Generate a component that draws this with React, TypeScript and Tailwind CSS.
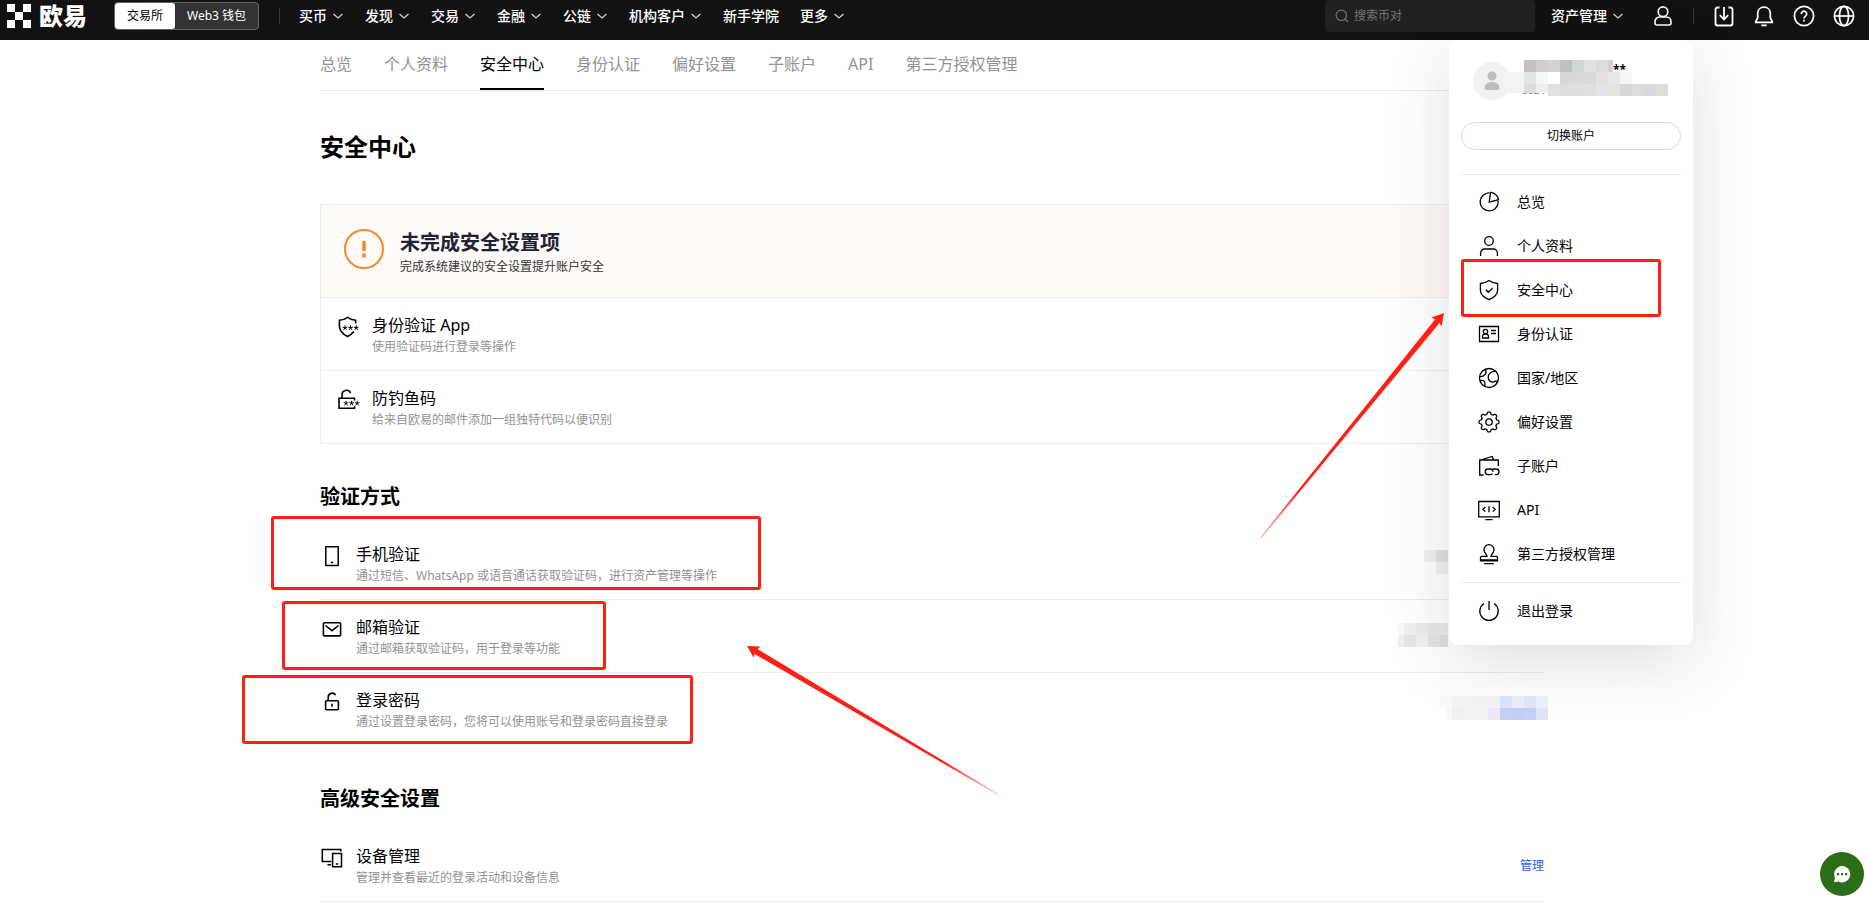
import type { ReactNode } from "react";
import clsx from "clsx";
import { twMerge } from "tailwind-merge";


const Icon = ({ size = "size-[22px]", width = 1.3, box = 22, children }: { size?: string; width?: number; box?: number; children: ReactNode }) => (
    <svg className={clsx("shrink-0", size)} viewBox={`0 0 ${box} ${box}`} fill="none" stroke="currentColor" strokeWidth={width} aria-hidden="true">
        {children}
    </svg>
)

const Chevron = () => (
    <svg className="size-3 shrink-0 text-neutral-300" viewBox="0 0 12 12" fill="none" stroke="currentColor" strokeWidth="1.3" aria-hidden="true">
        <path d="M1.5 4 6 8l4.5-4" />
    </svg>
)

// three little stars shared by the authenticator and anti-phishing icons
const Stars = ({ x, y }: { x: number; y: number }) => (
    <g strokeWidth="1">
        {[0, 5.6, 11.2].map((dx) => (
            <path key={dx} d={`M${x + dx} ${y - 2.5}v2.5l-2.3 -.7M${x + dx} ${y}l2.3 -.7M${x + dx} ${y}l-1.5 2.1M${x + dx} ${y}l1.5 2.1`} />
        ))}
    </g>
)

// outline of the settings cog: eight soft teeth round (11, 11)
const cogPath = Array.from({ length: 96 }, (_, i) => {
    const angle = (i / 96) * Math.PI * 2
    const wave = Math.tanh(2.2 * Math.cos(8 * angle))
    const r = 8.9 + 1.1 * wave
    return `${i ? "L" : "M"}${(11 + r * Math.cos(angle)).toFixed(2)} ${(11 + r * Math.sin(angle)).toFixed(2)}`
}).join("") + "Z"

const navItems = [
    { label: "买币", menu: true },
    { label: "发现", menu: true },
    { label: "交易", menu: true },
    { label: "金融", menu: true },
    { label: "公链", menu: true },
    { label: "机构客户", menu: true },
    { label: "新手学院", menu: false },
    { label: "更多", menu: true },
]

const tabs = ["总览", "个人资料", "安全中心", "身份认证", "偏好设置", "子账户", "API", "第三方授权管理"]

const menuItems = [
    {
        label: "总览",
        icon: (
            <Icon>
                <path d="M8.6 2.3A9 9 0 1 0 20 12.6" />
                <path d="M8.600 2.300C9.500 2 10.500 1.900 11.500 2M20 12.600c.1-.9.1-1.700 0-2.600" />
                <path d="M12.600 1.400 11.200 11.200l9.400-2.500a9.600 9.600 0 0 0-8-7.300Z" />
            </Icon>
        ),
    },
    {
        label: "个人资料",
        icon: (
            <Icon>
                <circle cx="11" cy="6" r="4.3" />
                <path d="M2.6 21v-3a4 4 0 0 1 4-4h8.8a4 4 0 0 1 4 4v3" />
            </Icon>
        ),
    },
    {
        label: "安全中心",
        marked: true,
        icon: (
            <Icon>
                <path d="M11 1.500c2.600 1.900 5.400 2.800 8.600 3v6.400c0 4.600-3.400 7.600-8.600 9.800-5.200-2.200-8.600-5.200-8.600-9.800V4.500c3.200-.2 6-1.100 8.600-3Z" />
                <path d="m7.800 10.800 2.500 2.500 4.400-4.400" />
            </Icon>
        ),
    },
    {
        label: "身份认证",
        icon: (
            <Icon>
                <path d="M1.500 3.500h19v15h-19z" />
                <circle cx="7.500" cy="8.500" r="2.200" />
                <path d="M4.500 15v-1.500a2.500 2.500 0 0 1 2.500-2.500h1a2.500 2.500 0 0 1 2.500 2.500V15zM13 7.500h5M13 10.500h5" />
            </Icon>
        ),
    },
    {
        label: "国家/地区",
        icon: (
            <Icon>
                <circle cx="11" cy="11" r="9.500" />
                <path d="M7 2.400c1.500 2 1.300 3.600.2 4.800C5.800 8.700 5.500 10 1.700 9.500M2.200 13.700c2-.6 3.800-.2 4.400 1.200.7 1.600-.2 2.400.5 4.600M17.500 4.400c-4.200-.4-7.500 2.400-7.300 6 .2 3 2.300 4.800 4.800 4.600 1.800-.2 2.200-1.500 3.700-1 .7.300.8 1 .4 2" />
            </Icon>
        ),
    },
    {
        label: "偏好设置",
        icon: (
            <Icon>
                <path d={cogPath} strokeLinejoin="round" />
                <circle cx="11" cy="11" r="3.200" />
            </Icon>
        ),
    },
    {
        label: "子账户",
        icon: (
            <Icon>
                <path d="M5.500 20H1.700V5h18.600v6M2.500 5l11.700-3.500L15.700 5" />
                <path d="M14.500 18.800c-.7.600-1.500.8-2.300.8H10a2.800 2.800 0 0 1 0-5.600h2.200a2.800 2.800 0 0 1 2.800 2.800M13.700 14.800c.7-.6 1.500-.8 2.300-.8h2.200a2.800 2.800 0 0 1 0 5.600H17" />
            </Icon>
        ),
    },
    {
        label: "API",
        icon: (
            <Icon>
                <path d="M.7 2.500h20.600v15.400H.7zM7.500 20.700h7M7.300 8 4.900 10.300l2.400 2.300M14.700 8l2.400 2.300-2.400 2.300M11 7.300v6" />
            </Icon>
        ),
    },
    {
        label: "第三方授权管理",
        icon: (
            <Icon>
                <path d="M9 13.300c0-2-3-3.200-3-6.600a5 5 0 0 1 10 0c0 3.400-3 4.600-3 6.600h5.200a1.300 1.300 0 0 1 1.300 1.300v3.200H2.500v-3.200a1.300 1.300 0 0 1 1.300-1.300zM6.200 20.600h9.600M3 16.800h16" />
            </Icon>
        ),
    },
]

const suggestions = [
    {
        title: "身份验证 App",
        desc: "使用验证码进行登录等操作",
        icon: (
            <Icon size="size-6" box={24} width={1.6}>
                <path d="M19.600 8.500V5.300C16.500 5 14 4 11.600 2.300 9.200 4 6.500 5 3.400 5.300v5.400c0 5 3.200 8.300 8.200 10.800 2.600-1.300 4.700-2.900 6.200-4.900" />
                <Stars x={9} y={12.800} />
            </Icon>
        ),
    },
    {
        title: "防钓鱼码",
        desc: "给来自欧易的邮件添加一组独特代码以便识别",
        icon: (
            <Icon size="size-6" box={24} width={1.6}>
                <path d="M18.500 12.500V10.300H3v9.900h15.500v-2M6 10V7a4.500 4.500 0 0 1 8.600-2" />
                <Stars x={10} y={15.300} />
            </Icon>
        ),
    },
]

const methods = [
    {
        title: "手机验证",
        desc: "通过短信、WhatsApp 或语音通话获取验证码，进行资产管理等操作",
        mark: "-left-[49px] -top-[11px] h-[74px] w-[490px]",
        mosaicPlace: "mr-24",
        mosaic: [
            ["bg-[#f1f1f3]", "bg-[#e2e2e4]"],
            ["bg-[#f2f2f4]"],
        ],
        icon: (
            <Icon size="size-6" box={24} width={1.5}>
                <path d="M5.800 2.800h12.400v18.700H5.800zM10.800 18.500h2.400" />
            </Icon>
        ),
    },
    {
        title: "邮箱验证",
        desc: "通过邮箱获取验证码，用于登录等功能",
        mark: "-left-[38px] top-px h-[69px] w-[324px]",
        mosaicPlace: "mr-24",
        mosaic: [
            ["w-1.5 bg-[#f7f7f7]", "bg-[#f0f0f0]", "bg-[#ececec]", "bg-[#e8e8e9]", "w-2 bg-[#eaeaeb]"],
            ["w-1.5 bg-[#efefef]", "bg-[#e6e6e6]", "bg-[#f0f1f3]", "bg-[#e4e4e4]", "w-2 bg-[#dedee0]"],
        ],
        icon: (
            <Icon size="size-6" box={24} width={1.6}>
                <rect x="3.400" y="5.700" width="17.200" height="13.200" rx="1" />
                <path d="m5.500 8.500 6.500 5.200 6.500-5.200" />
            </Icon>
        ),
    },
    {
        title: "登录密码",
        desc: "通过设置登录密码，您将可以使用账号和登录密码直接登录",
        mark: "-left-[78px] top-[2px] h-[69px] w-[451px]",
        mosaicPlace: "-mr-1",
        mosaic: [
            ["bg-[#fafafa]", "bg-[#f3f4f3]", "bg-[#f4f4f3]", "bg-[#f3f3f3]", "bg-[#f2f2fb]", "bg-[#dfe5f8]", "bg-[#eceefa]", "bg-[#e3e8f7]", "bg-[#eef1fb]"],
            ["w-1.5 bg-[#f7f7f6]", "bg-[#f1f0ee]", "bg-[#f1f3f2]", "bg-[#f2f3f2]", "bg-[#e9e9f9]", "bg-[#c6d0f4]", "bg-[#c2cef4]", "bg-[#c8cff4]", "bg-[#dce5f9]"],
        ],
        icon: (
            <Icon size="size-6" box={24} width={1.600}>
                <rect x="5.600" y="10.700" width="12.800" height="9" rx="1" />
                <path d="M8.200 10.500V7.300a4 4 0 0 1 7.400-2.200M12 13.700v3" />
            </Icon>
        ),
    },
]

const profileMosaic = [
    ["bg-[#c0c1c3]", "bg-[#cfcccb]", "bg-[#d1d1d1]", "bg-[#c1bec0]", "bg-[#d0d4d5]", "bg-[#e2e2e2]", "bg-[#dddbd9]", "w-[5px] bg-[#d2d2d2]"],
    ["bg-[#e2e6e3]", "bg-[#f6f6f6]", "bg-white", "bg-[#dad8d6]", "bg-[#d8d9db]", "bg-[#dad9d9]", "bg-[#e3e1df]", "bg-[#e5e7e9]", "bg-[#f5f5f5]"],
    ["h-[9px] bg-[#dbdbd9]", "h-[9px] bg-[#eeeeee]", "bg-[#dfe2e0]", "bg-[#dddddc]", "bg-[#dedede]", "bg-[#dfdfdf]", "bg-[#e1e5e6]", "bg-[#e3e3e0]", "bg-[#d9d8d8]", "bg-[#dddbd9]", "bg-[#d8d9dc]", "bg-[#dfdddb]"],
]

const Mosaic = ({ rows, align = "items-end" }: { rows: string[][]; align?: string }) => (
    <div className={clsx("flex flex-col", align)} aria-hidden="true">
        {rows.map((row, i) => (
            <div key={i} className="flex">
                {row.map((cell, j) => (
                    <span key={j} className={twMerge("h-3 w-3", cell)} />
                ))}
            </div>
        ))}
    </div>
)

const Mark = ({ place }: { place: string }) => (
    <span className={clsx("pointer-events-none absolute rounded-[3px] border-[3px] border-[#ff2015]", place)} />
)

const Row = ({ title, desc, icon, children }: { title: string; desc: string; icon: ReactNode; children?: ReactNode }) => (
    <>
        <div className="flex gap-3">
            <span className="mt-0.5">{icon}</span>
            <div>
                <h3 className="text-base">{title}</h3>
                <p className="text-xs leading-5 text-[#929292]">{desc}</p>
            </div>
        </div>
        {children}
    </>
)

const AccountMenu = () => (
    <div className="absolute right-44 top-full w-61 rounded-lg bg-white px-3 pb-3 text-sm text-black shadow-[0_16px_64px_rgba(18,24,38,0.14)]">
        <div className="relative flex h-[82px] gap-3 px-3 pt-[22px]">
            <span className="flex size-[38px] items-center justify-center rounded-full bg-[#f1f1f1]">
                <svg className="size-5" viewBox="0 0 20 20" fill="#bdbdbd" aria-hidden="true">
                    <circle cx="10" cy="5" r="4.500" />
                    <path d="M2.500 17c0-3.500 3-6 7.500-6s7.500 2.500 7.500 6c0 1.500-1 2-2.500 2H5c-1.500 0-2.500-.5-2.500-2Z" />
                </svg>
            </span>
            <p className="absolute left-[59px] top-10 text-xs leading-5 text-[#929292]">UID:</p>
            <div className="absolute left-[42px] top-8 h-[21px] w-[21px] bg-[#f3f3f2]" />
            <b className="absolute left-[152px] top-5 text-xs leading-5">**</b>
            <div className="absolute left-[63px] top-5">
                <Mosaic rows={profileMosaic} align="items-start" />
            </div>
        </div>
        <button type="button" className="h-7 w-full rounded-full border border-[#dbdbdb] text-xs">切换账户</button>
        <ul className="mt-6 border-y border-[#ebecf2] pt-[5px] pb-[6px]">
            {menuItems.map((item) => (
                <li key={item.label} className="relative">
                    <a href="#" className="flex h-11 items-center gap-[17px] px-[17px]">
                        {item.icon}
                        {item.label}
                    </a>
                    {item.marked && <Mark place="left-0 right-5 -top-[9px] h-[58px]" />}
                </li>
            ))}
        </ul>
        <a href="#" className="mt-[6px] flex h-11 items-center gap-[17px] px-[17px]">
            <Icon>
                <path d="M6 3.500a9.200 9.200 0 1 0 10 0M11 1v9" />
            </Icon>
            退出登录
        </a>
    </div>
)

const Header = () => (
    <header className="relative z-10 flex h-10 items-center bg-[#121212] pb-2 pl-[7px] pr-[14px] text-sm text-white">
        <a href="#" className="flex items-center gap-2">
            <svg className="size-6" viewBox="0 0 24 24" fill="currentColor" aria-hidden="true">
                <path d="M0 0h8v8H0zM16 0h8v8h-8zM8 8h8v8H8zM0 16h8v8H0zM16 16h8v8h-8z" />
            </svg>
            <span className="text-2xl leading-8 font-black">欧易</span>
        </a>
        <div className="ml-[27px] flex h-7 items-stretch rounded border border-[#666] bg-[#333] text-xs">
            <button type="button" className="rounded-[3px] bg-white px-3 text-black">交易所</button>
            <button type="button" className="px-3">Web3 钱包</button>
        </div>
        <span className="ml-5 h-4 w-px bg-[#3a3a3a]" />
        <nav className="ml-[19px] flex items-center gap-[21px]">
            {navItems.map((item) => (
                <a key={item.label} href="#" className="flex items-center gap-[5px] font-medium whitespace-nowrap">
                    {item.label}
                    {item.menu && <Chevron />}
                </a>
            ))}
        </nav>
        <label className="ml-auto flex h-8 w-[210px] items-center gap-[5px] rounded bg-[#212121] px-[10px] text-[#757575]">
            <Icon size="size-[14px]" box={14} width={1.200}>
                <circle cx="6.300" cy="6.300" r="5.200" />
                <path d="m10 10 3.200 3.200" />
            </Icon>
            <input type="text" placeholder="搜索币对" aria-label="搜索币对" className="w-full min-w-0 bg-transparent text-xs outline-none placeholder:text-[#757575]" />
        </label>
        <a href="#" className="ml-4 flex items-center gap-[5px] font-medium">
            资产管理
            <Chevron />
        </a>
        <button type="button" aria-label="账户" className="ml-7">
            <Icon width={1.600}>
                <circle cx="11" cy="6.700" r="4.800" />
                <path d="M7.500 12h7a4.500 4.500 0 0 1 4.500 4.500V18a2 2 0 0 1-2 2H5a2 2 0 0 1-2-2v-1.500A4.500 4.500 0 0 1 7.500 12Z" />
            </Icon>
        </button>
        <span className="mx-[19px] h-4 w-px bg-[#3a3a3a]" />
        <div className="flex items-center gap-[18px]">
            <button type="button" aria-label="下载">
                <Icon width={1.800}>
                    <path d="M6.500 2.500h-2a2 2 0 0 0-2 2v14a2 2 0 0 0 2 2h13a2 2 0 0 0 2-2v-14a2 2 0 0 0-2-2h-2M11 2v12M6.800 10.200l4.200 4.200 4.200-4.200" />
                </Icon>
            </button>
            <button type="button" aria-label="通知">
                <Icon width={1.700}>
                    <path d="M11 2.200c-3.800 0-6.300 2.800-6.300 6.300v4.500l-2 3.500v.8h16.600v-.8l-2-3.500V8.500c0-3.500-2.500-6.300-6.300-6.300ZM8.300 20.400h5.400" />
                </Icon>
            </button>
            <button type="button" aria-label="帮助">
                <Icon width={1.700}>
                    <circle cx="11" cy="11" r="9.600" />
                    <path d="M8.300 9a2.700 2.700 0 1 1 4.300 2.100c-1 .7-1.600 1.100-1.600 2.300M11 14.700v1.800" />
                </Icon>
            </button>
            <button type="button" aria-label="语言">
                <Icon width={1.700}>
                    <circle cx="11" cy="11" r="9.600" />
                    <ellipse cx="11" cy="11" rx="4.600" ry="9.600" />
                    <path d="M1.500 11h19" />
                </Icon>
            </button>
        </div>
        <AccountMenu />
    </header>
)

const App = () => {

    return (

        <div className="relative min-h-screen overflow-hidden bg-white font-['Noto_Sans','Noto_Sans_CJK_SC',sans-serif] text-black">
            <Header />

            <div className="pr-[5px]">
                <main className="relative mx-auto max-w-[1224px]">
                    <nav className="flex gap-8 border-b border-[#ebebeb] text-base text-[#929292]">
                        {tabs.map((tab) => (
                            <a key={tab} href="#" className={clsx("h-[50px] pt-3", tab === "安全中心" && "border-b-2 border-black text-black")}>
                                {tab}
                            </a>
                        ))}
                    </nav>

                    <h1 className="mt-10 text-2xl leading-8 font-bold">安全中心</h1>

                    <section className="mt-[41px] border border-[#ebeef8]">
                        <div className="flex items-start gap-4 border-b border-[#ebeef8] bg-[#fff9f8] px-[23px] pt-6 pb-5">
                            <svg className="size-10" viewBox="0 0 40 40" fill="none" stroke="#f5892a" aria-hidden="true">
                                <circle cx="20" cy="20" r="19" strokeWidth="2" />
                                <path d="M20 12v10M20 24.500v4" strokeWidth="3.500" />
                            </svg>
                            <div>
                                <h2 className="text-xl leading-7 font-bold text-[#1d2333]">未完成安全设置项</h2>
                                <p className="text-xs leading-5 text-[#333]">完成系统建议的安全设置提升账户安全</p>
                            </div>
                        </div>
                        <ul className="divide-y divide-[#ebeef8]">
                            {suggestions.map((item) => (
                                <li key={item.title} className="flex items-center justify-between px-[15px] pt-[15px] pb-[13px]">
                                    <Row title={item.title} desc={item.desc} icon={item.icon} />
                                </li>
                            ))}
                        </ul>
                    </section>

                    <h2 className="mt-[39px] text-xl leading-7 font-bold">验证方式</h2>
                    <ul className="mt-4 divide-y divide-[#ebecf5]">
                        {methods.map((item) => (
                            <li key={item.title} className="relative flex items-center justify-between pt-[15px] pb-[13px]">
                                <Row title={item.title} desc={item.desc} icon={item.icon}>
                                    <div className={clsx("mb-1", item.mosaicPlace)}>
                                        <Mosaic rows={item.mosaic} />
                                    </div>
                                </Row>
                                <Mark place={item.mark} />
                            </li>
                        ))}
                    </ul>

                    <h2 className="mt-10 text-xl leading-7 font-bold">高级安全设置</h2>
                    <div className="mt-4 flex items-center justify-between border-b border-[#ebeef8] pt-[15px] pb-[13px]">
                        <Row
                            title="设备管理"
                            desc="管理并查看最近的登录活动和设备信息"
                            icon={
                                <Icon size="size-6" box={24} width={1.500}>
                                    <path d="M20.800 5.500V3.500H2.300v12h9M7.500 18.800h3.500M12.600 7.400h8.900v13.300h-8.900zM15.800 18h2.400" />
                                </Icon>
                            }
                        />
                        <a href="#" className="text-xs text-[#2b60e6]">管理</a>
                    </div>

                </main>
            </div>

            {/* arrows pointing at the menu entry and the verification rows */}
            <svg className="pointer-events-none absolute left-[1260px] top-[312px] z-20 h-[228px] w-[186px]" viewBox="0 0 186 228" aria-hidden="true">
                <defs>
                    <linearGradient id="fade-up" gradientUnits="userSpaceOnUse" x1="0" y1="226" x2="40" y2="178">
                        <stop offset="0" stopColor="#ff2015" stopOpacity="0.3" />
                        <stop offset="1" stopColor="#ff2015" />
                    </linearGradient>
                </defs>
                <path d="M184 1 181.500 14.500 179.500 11 1 226.500 0 225.700 175 7.500 171.500 5.500Z" fill="url(#fade-up)" />
            </svg>
            <svg className="pointer-events-none absolute left-[746px] top-[645px] z-20 h-[152px] w-[254px]" viewBox="0 0 254 152" aria-hidden="true">
                <defs>
                    <linearGradient id="fade-left" gradientUnits="userSpaceOnUse" x1="252" y1="149" x2="200" y2="118">
                        <stop offset="0" stopColor="#ff2015" stopOpacity="0.2" />
                        <stop offset="1" stopColor="#ff2015" />
                    </linearGradient>
                </defs>
                <path d="M1 1 14.500 1.500 11.500 4 252.400 149 251.800 150 8.500 9 7.500 12.500Z" fill="url(#fade-left)" />
            </svg>

            <button type="button" aria-label="在线客服" className="absolute top-[852px] right-[5px] flex size-11 items-center justify-center rounded-full bg-[#2c6e18]">
                <svg className="size-[18px]" viewBox="0 0 18 18" aria-hidden="true">
                    <path d="M9 1a8.200 8.200 0 1 1-3.500 15.600L1 17.300l1-4.500A8.200 8.200 0 0 1 9 1Z" fill="#fff" />
                    <path d="M4 8h2.200v2.200H4zM8 8h2.200v2.200H8zM12 8h2.200v2.200H12z" fill="#2c6e18" />
                </svg>
            </button>
        </div>
    )
}

export default App;
